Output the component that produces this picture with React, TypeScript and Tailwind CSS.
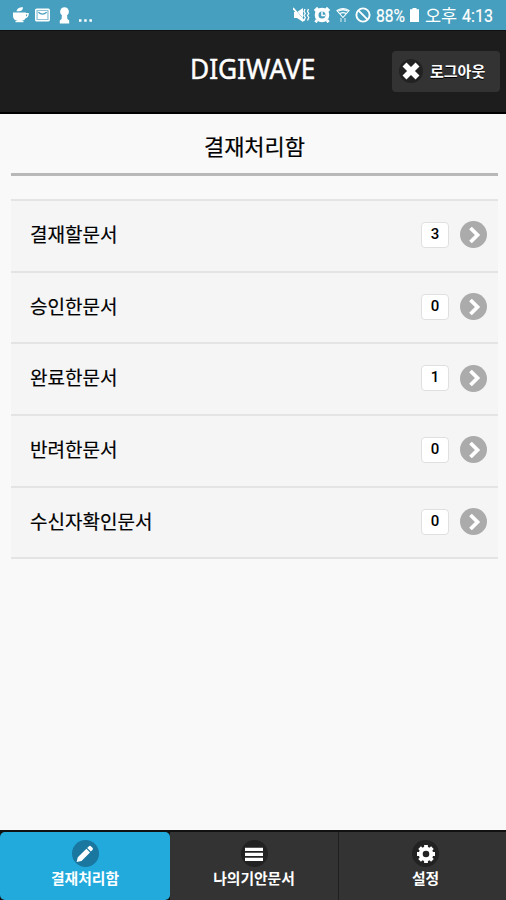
import React, { useState } from 'react'

const documents = [
    { label: '결재할문서', count: 3 },
    { label: '승인한문서', count: 0 },
    { label: '완료한문서', count: 1 },
    { label: '반려한문서', count: 0 },
    { label: '수신자확인문서', count: 0 },
]

function StatusBar() {
    return (
        <div className="flex h-[30px] shrink-0 items-center justify-between bg-[#469fbe] pl-[13px] pr-[13px] text-white">
            <div className="flex items-center">
                <svg className="h-4 w-4" viewBox="0 0 16 16" fill="currentColor">
                    <path d="M0 5.6h13v3.6a4.8 4.8 0 0 1-4.8 4.8H5A5 5 0 0 1 0 9z" />
                    <path d="M3.5 4.3C4.2 1.5 6 .3 10 .3 10 3 8 4.6 5.5 4.3z" />
                    <path d="M12.5 6.8h2.6c0 2.7-1.3 3.7-3.6 3.9" fill="none" stroke="currentColor" strokeWidth="1.4" />
                    <path d="M2.5 14h8v1.2h-8z" />
                </svg>
                <svg className="ml-[6px] h-[14px] w-[15px]" viewBox="0 0 15 14">
                    <rect x=".7" y="1.2" width="13.6" height="11.6" rx="1" fill="#8cc3d7" stroke="#fff" strokeWidth="1.4" />
                    <path d="M2.7 3h9.6v8H2.7z" fill="#fff" />
                    <path d="M3.4 4.3q4.1 3.6 8.2 0" fill="none" stroke="#469fbe" strokeWidth="1.3" />
                </svg>
                <svg className="ml-[9px] h-[17px] w-[11px]" viewBox="0 0 11 17" fill="currentColor">
                    <circle cx="5.5" cy="4.7" r="4.4" />
                    <path d="M3 7h5l.4 5 1.8 1.5v3H.8v-3L2.6 12z" />
                </svg>
                <svg className="ml-[9px] mt-[10px] h-[3px] w-[13px]" viewBox="0 0 13 3" fill="currentColor">
                    <path d="M0 .3h2.5v2.5H0zM5.2.3h2.5v2.5H5.2zM10.4.3h2.5v2.5h-2.5z" />
                </svg>
            </div>
            <div className="flex items-center">
                <svg className="h-4 w-[17px]" viewBox="0 0 17 16" fill="none" stroke="currentColor">
                    <path d="M1 5h3l6-4v14l-6-4H1z" fill="currentColor" stroke="none" />
                    <path d="M1 1l11 13" stroke="#469fbe" strokeWidth="1" />
                    <path d="M0 1l11 13" strokeWidth="1.9" />
                    <path d="M12 2l-1 2.5 1.3 2-1.3 2 1.3 2-1.3 3M15.5 2l-1 2.5 1.3 2-1.3 2 1.3 2-1.3 3" strokeWidth="1.3" />
                </svg>
                <svg className="ml-[4px] h-4 w-4" viewBox="0 0 16 16">
                    <path d="M.8 4L4 .8M15.2 4L12 .8M3 13l-1.5 2.3M13 13l1.5 2.3" stroke="#fff" strokeWidth="2.8" />
                    <circle cx="8" cy="8" r="5.4" fill="#469fbe" stroke="#fff" strokeWidth="3.8" />
                    <path d="M8 4.5v4h3" fill="none" stroke="#fff" strokeWidth="1.5" />
                </svg>
                <svg className="ml-[6px] h-4 w-[14px]" viewBox="0 0 14 16" fill="none" stroke="currentColor">
                    <path d="M1 3.5Q7-.5 13 3.5L7 10.5z" strokeWidth="1.1" />
                    <path d="M2.5 4Q7 1.5 11.5 4M4 6.5Q7 4.8 10 6.5" strokeWidth="1.4" />
                    <path d="M5 11v4M9 11v4" strokeWidth="1.4" opacity=".6" />
                </svg>
                <svg className="ml-[5px] h-4 w-4" viewBox="0 0 16 16" fill="none" stroke="currentColor" strokeWidth="1.9">
                    <circle cx="8" cy="8" r="6.6" />
                    <path d="M3.4 3.4l9.2 9.2" />
                </svg>
                <span className="ml-[5px] w-[30px] whitespace-nowrap pt-px font-[Roboto,sans-serif] text-[18px] leading-[30px]">
                    <span className="inline-block origin-left scale-x-[0.87] [-webkit-text-stroke:0.2px_#fff]">88%</span>
                </span>
                <svg className="ml-[4px] h-[14px] w-[9px]" viewBox="0 0 9 14" fill="currentColor">
                    <path d="M2.5 0h4v1.2H9V14H0V1.2h2.5z" />
                </svg>
                <span className="ml-[6px] w-[32px] whitespace-nowrap font-['Noto_Sans_CJK_KR',sans-serif] text-[17.5px] leading-[30px]">오후</span>
                <span className="ml-[5px] w-[31px] whitespace-nowrap pt-px font-[Roboto,sans-serif] text-[18px] leading-[30px]">
                    <span className="inline-block origin-left scale-x-[0.89] [-webkit-text-stroke:0.2px_#fff]">4:13</span>
                </span>
            </div>
        </div>
    )
}

function Header() {
    return (
        <header className="grid h-[84px] shrink-0 grid-cols-[1fr_126px_1fr] items-center border-b-2 border-t border-b-black border-t-[#101010] bg-[#1d1d1d] pb-px text-white">
            <h1 className="col-start-2 -mt-[7px] whitespace-nowrap font-['Noto_Sans',sans-serif] text-[28px] leading-8 [text-shadow:0_1px_0_#000]">
                <span className="inline-block origin-left scale-x-[0.937] [-webkit-text-stroke:0.5px_#fff]">DIGIWAVE</span>
            </h1>
            <button className="mr-[6px] flex h-[41px] w-[108px] items-center justify-self-end rounded-[4px] bg-[#333333] pl-[7px]">
                <span className="flex h-6 w-6 items-center justify-center rounded-full bg-[#222222]">
                    <svg className="h-[18px] w-[18px]" viewBox="0 0 18 18" fill="none" stroke="currentColor" strokeWidth="5.6">
                        <path d="M2.5 2.5l13 13M15.5 2.5l-13 13" />
                    </svg>
                </span>
                <span className="-mt-px ml-[7px] text-[15px] font-bold leading-5 [text-shadow:0_1px_0_#000]">로그아웃</span>
            </button>
        </header>
    )
}

function PencilIcon() {
    return (
        <svg className="h-[18px] w-[18px]" viewBox="0 0 18 18" fill="currentColor">
            <path d="M1.8 12.2L.6 17l4.9-1.1L14 7.4 10.4 3.7zM16.5 2.8l-1.4-1.4a1.7 1.7 0 0 0-2.4 0l-1.5 1.5 3.6 3.7 1.7-1.7a1.5 1.5 0 0 0 0-2.1z" />
        </svg>
    )
}

function BarsIcon() {
    return (
        <svg className="h-[18px] w-[18px]" viewBox="0 0 18 18" fill="currentColor">
            <path d="M0 2.7h18v3.2H0zM0 7.7h18v3.2H0zM0 12.7h18v3.2H0z" />
        </svg>
    )
}

function GearIcon() {
    return (
        <svg className="h-[18px] w-[18px]" viewBox="0 0 18 18" fill="none" stroke="currentColor">
            <circle cx="9" cy="9" r="5.3" strokeWidth="4" />
            <path d="M9 0v3M9 15v3M0 9h3M15 9h3M2.6 2.6l2.2 2.2M13.2 13.2l2.2 2.2M2.6 15.4l2.2-2.2M13.2 4.8l2.2-2.2" strokeWidth="3.8" />
        </svg>
    )
}

const tabs = [
    { label: '결재처리함', icon: <PencilIcon /> },
    { label: '나의기안문서', icon: <BarsIcon /> },
    { label: '설정', icon: <GearIcon /> },
]

export default function App() {
    const [activeTab, setActiveTab] = useState(0)

    return (
        <div className="flex h-[900px] w-[506px] flex-col overflow-hidden bg-[#f9f9f9] font-['Noto_Sans_CJK_KR',sans-serif]">
            <StatusBar />
            <Header />
            <main className="flex-1 pl-[11px] pr-[8px]">
                <h2 className="flex h-[62px] items-center justify-center border-b-[3px] border-[#b8b8b8] pt-[3px] text-[22px] text-black [-webkit-text-stroke:0.2px_#000]">
                    결재처리함
                </h2>
                <ul className="mt-[23px] border-b-2 border-[#e4e4e4]">
                    {documents.map((doc) => (
                        <li key={doc.label} className="flex h-[71.7px] items-center border-t-2 border-[#e4e4e4] bg-[#f5f5f5] pb-[2px] pl-[19px] pr-[11px]">
                            <span className="-mt-[2px] flex-1 text-[19px] leading-7 text-black [-webkit-text-stroke:0.2px_#000]">{doc.label}</span>
                            <span className="flex h-[26px] w-[28px] items-center justify-center rounded-[4px] border border-[#e0e0e0] bg-white pb-px font-[Roboto,sans-serif] text-[15px] font-medium text-black">
                                {doc.count}
                            </span>
                            <span className="ml-[11px] flex h-[27px] w-[27px] items-center justify-center rounded-full bg-[#ababab]">
                                <svg className="h-[18px] w-[18px]" viewBox="0 0 18 18" fill="none" stroke="#fff" strokeWidth="3.8">
                                    <path d="M5.5 2l7 7-7 7" />
                                </svg>
                            </span>
                        </li>
                    ))}
                </ul>
            </main>
            <footer className="h-[70px] shrink-0 border-t-2 border-[#111111] bg-[#111111]">
                <nav className="grid h-full grid-cols-[170px_169px_174px]">
                    {tabs.map((tab, index) => (
                        <button
                            key={tab.label}
                            onClick={() => setActiveTab(index)}
                            className={
                                activeTab === index
                                    ? 'flex flex-col items-center rounded-[5px] bg-[#22aadd] pt-[8px] text-white'
                                    : 'flex flex-col items-center border-r border-[#1f1f1f] bg-[#333333] pt-[8px] text-white'
                            }
                        >
                            <span
                                className={
                                    activeTab === index
                                        ? 'flex h-[27px] w-[27px] items-center justify-center rounded-full bg-[#1977a0]'
                                        : 'flex h-[27px] w-[27px] items-center justify-center rounded-full bg-[#222222]'
                                }
                            >
                                {tab.icon}
                            </span>
                            <span className="mt-px whitespace-nowrap text-[14.8px] font-bold leading-5">{tab.label}</span>
                        </button>
                    ))}
                </nav>
            </footer>
        </div>
    )
}
